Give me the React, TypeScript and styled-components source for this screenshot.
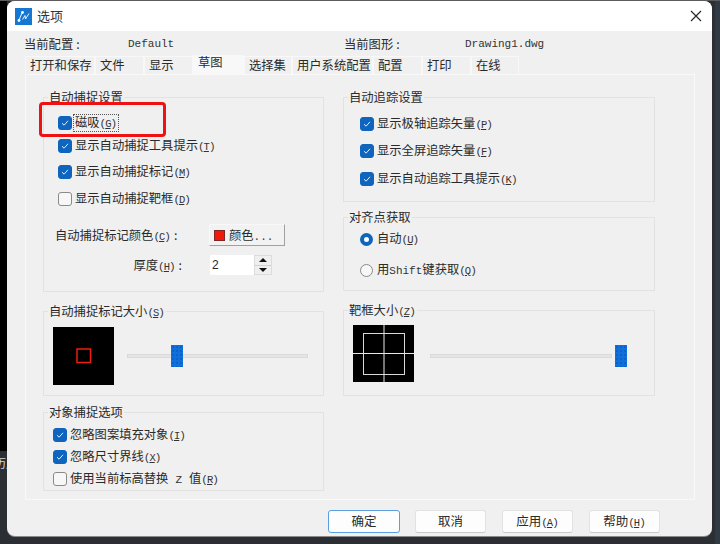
import React from 'react';
import styled, { createGlobalStyle } from 'styled-components';

const Global = createGlobalStyle`
  html, body { margin: 0; padding: 0; background: #2b2e33; }
  * { box-sizing: border-box; }
`;

const cjk = `"Noto Sans CJK SC", "Liberation Sans", sans-serif`;

const Page = styled.div`
  width: 720px;
  height: 544px;
  position: relative;
  overflow: hidden;
  display: flex;
  align-items: flex-start;
  background: #2b2e33;
  border-top: 1px solid #5c5c5c;
  font-family: ${cjk};
  font-size: 12.3px;
  color: #2a2a2a;
`;
const LeftStrip = styled.div`
  width: 7px;
  flex: none;
  display: flex;
  flex-direction: column;
  overflow: hidden;
`;
const BlackPart = styled.div`
  height: 450px;
  background: #000;
`;
const Fragment = styled.div`
  height: 24px;
  line-height: 24px;
  white-space: nowrap;
  color: #d8d8d8;
  font-size: 12px;
  text-indent: -6px;
`;
const RightStrip = styled.div`
  width: 8px;
  height: 543px;
  flex: none;
  background: #2f3a45;
  border-left: 3px solid #2b2e33;
`;
const Dialog = styled.div`
  width: 705px;
  height: 535px;
  flex: none;
  background: #f0f0f0;
  border-radius: 8px;
  overflow: hidden;
  box-shadow: 0 1px 0 #8a8a8a;
  display: flex;
  flex-direction: column;
`;
const TitleBar = styled.div`
  height: 30px;
  flex: none;
  background: #fff;
  display: flex;
  align-items: center;
  padding: 0 10px 0 8px;
  gap: 5px;
  font-size: 13px;
`;
const TitleText = styled.span`
  flex: 1;
  color: #333;
  padding-bottom: 2px;
`;
const ProfileRow = styled.div`
  display: grid;
  grid-template-columns: 104px 216px 121px 1fr;
  margin: 4px 0 0 17px;
  height: 16px;
  line-height: 16px;
  align-items: center;
`;
const Mono = styled.span`
  font-family: "Liberation Mono", monospace;
  font-size: 11px;
  color: #333;
`;
const ProfileValue = styled(Mono)`
  padding-top: 1px;
`;
const HotText = styled(Mono)`
  letter-spacing: -1px;
  margin-right: 1px;
`;
const TabStrip = styled.div`
  display: flex;
  align-items: flex-end;
  margin: 4px 0 0 18px;
  height: 19px;
`;
const Tab = styled.div<{ $w: number; $active?: boolean }>`
  width: ${p => p.$w}px;
  height: ${p => (p.$active ? 19 : 18)}px;
  line-height: ${p => (p.$active ? 13 : 17)}px;
  padding-left: 4px;
  background: ${p => (p.$active ? '#f8f8f8' : '#f0f0f0')};
  border: 1px solid #f8f8f8;
  border-bottom: none;
  white-space: nowrap;
`;
const TabPanel = styled.div`
  margin-left: 18px;
  width: 670px;
  height: 426px;
  border: 1px solid #f9f9f9;
  padding: 22px 0 0 17px;
  display: grid;
  grid-template-columns: 281px 312px;
  column-gap: 19px;
  align-items: start;
`;
const Column = styled.div`
  display: flex;
  flex-direction: column;
`;
const Group = styled.div<{ $h: number; $mt?: number; $pt: number; $pl: number }>`
  position: relative;
  height: ${p => p.$h}px;
  margin-top: ${p => p.$mt ?? 0}px;
  padding: ${p => p.$pt}px 0 0 ${p => p.$pl}px;
  border: 1px solid #e2e2e2;
`;
const Legend = styled.div`
  position: absolute;
  left: 4px;
  top: -9px;
  height: 16px;
  line-height: 16px;
  padding: 0 1px;
  background: #f0f0f0;
  white-space: nowrap;
`;
const OptionRow = styled.div<{ $h: number; $mt?: number }>`
  height: ${p => p.$h}px;
  margin-top: ${p => p.$mt ?? 0}px;
  display: flex;
  align-items: center;
  gap: 3px;
  white-space: nowrap;
`;
const OptionText = styled.span`
  padding-bottom: 2px;
`;
const CheckBox = styled.span<{ $on?: boolean }>`
  width: 14px;
  height: 14px;
  flex: none;
  border-radius: 3px;
  display: flex;
  align-items: center;
  justify-content: center;
  background: ${p => (p.$on ? '#0f65bd' : '#f7f7f7')};
  border: 1px solid ${p => (p.$on ? '#0f65bd' : '#8a8a8a')};
`;
const Radio = styled.span<{ $on?: boolean }>`
  width: 13px;
  height: 13px;
  flex: none;
  margin-right: 1px;
  border-radius: 50%;
  background: ${p => (p.$on ? '#fff' : '#f7f7f7')};
  border: ${p => (p.$on ? '4px solid #0f65bd' : '1px solid #8a8a8a')};
`;
const Focus = styled.span`
  outline: 1px dotted #555;
  outline-offset: 0;
  padding: 0 1px;
  margin-left: -1px;
  height: 16px;
  line-height: 15px;
  display: inline-block;
`;
const Under = styled.span`
  font-family: "Liberation Mono", monospace;
  font-size: 10.5px;
  text-decoration: underline;
`;
const ZLetter = styled(Mono)`
  padding: 0 7px;
`;
const Colon = styled.span`
  margin-left: 3px;
`;
const FormRow = styled.div<{ $mt: number }>`
  display: flex;
  align-items: center;
  margin: ${p => p.$mt}px 0 0 -3px;
`;
const FormLabel = styled.span<{ $w: number; $right?: boolean }>`
  width: ${p => p.$w}px;
  flex: none;
  white-space: nowrap;
  text-align: ${p => (p.$right ? 'right' : 'left')};
  padding-right: ${p => (p.$right ? 28 : 0)}px;
`;
const ColorButton = styled.div`
  width: 76px;
  height: 22px;
  background: #f2f2f2;
  border: 1px solid #f8f8f8;
  border-right-color: #a0a0a0;
  border-bottom-color: #a0a0a0;
  display: flex;
  align-items: center;
  gap: 4px;
  padding-left: 4px;
`;
const Swatch = styled.span`
  width: 11px;
  height: 11px;
  background: #f5170a;
  border: 1px solid #7a2a22;
`;
const NumberInput = styled.div`
  width: 44px;
  height: 20px;
  background: #fff;
  line-height: 20px;
  padding-left: 2px;
  font-family: "Liberation Sans", sans-serif;
  font-size: 12px;
`;
const Spinner = styled.div`
  width: 18px;
  height: 20px;
  display: flex;
  flex-direction: column;
  gap: 1px;
  background: #d0d0d0;
  border: 1px solid #dcdcdc;
`;
const SpinButton = styled.div<{ $down?: boolean }>`
  flex: 1;
  background: #efefef;
  display: flex;
  align-items: center;
  justify-content: center;
  &::after {
    content: '';
    border-left: 4px solid transparent;
    border-right: 4px solid transparent;
    ${p => (p.$down ? 'border-top: 4px solid #111;' : 'border-bottom: 4px solid #111;')}
  }
`;
const SizeRow = styled.div`
  display: flex;
  align-items: flex-start;
`;
const Preview = styled.svg`
  flex: none;
  display: block;
`;
const Slider = styled.div<{ $w: number; $ml: number; $mt: number }>`
  position: relative;
  width: ${p => p.$w}px;
  height: 22px;
  margin: ${p => p.$mt}px 0 0 ${p => p.$ml}px;
  display: flex;
  align-items: center;
`;
const Track = styled.div`
  width: 100%;
  height: 4px;
  background: #e6e6e6;
  border: 1px solid #dadada;
`;
const Thumb = styled.div<{ $left: number }>`
  position: absolute;
  left: ${p => p.$left}px;
  top: 0;
  width: 12px;
  height: 22px;
  background-color: #0f6fdc;
  background-image: radial-gradient(#0a52a8 0.6px, transparent 0.8px);
  background-size: 4px 4px;
`;
const ButtonRow = styled.div`
  display: flex;
  gap: 16px;
  margin: 10px 0 0 321px;
`;
const DialogButton = styled.div<{ $primary?: boolean }>`
  width: ${p => (p.$primary ? 72 : 71)}px;
  margin-right: ${p => (p.$primary ? -1 : 0)}px;
  height: 23px;
  line-height: 20px;
  text-align: center;
  background: #fdfdfd;
  border: 1px solid ${p => (p.$primary ? '#5b9fe0' : '#e2e2e2')};
  border-bottom-color: ${p => (p.$primary ? '#5b9fe0' : '#c8c8c8')};
  border-radius: 3px;
  font-size: 12.5px;
`;
const Annotation = styled.div`
  position: absolute;
  left: 39px;
  top: 101px;
  width: 127px;
  height: 35px;
  border: 3px solid #f01212;
  border-radius: 4px;
`;

const Check = () => (
  <svg width="8" height="8" viewBox="0 0 8 8">
    <path d="M1 4.2 L3.1 6.2 L7 1.8" fill="none" stroke="#dfeeff" strokeWidth="1" />
  </svg>
);

const Hot = ({ k }: { k: string }) => (
  <HotText>
    (<Under>{k}</Under>)
  </HotText>
);

const Option = ({ on, h, label, k }: { on?: boolean; h: number; label: React.ReactNode; k: string }) => (
  <OptionRow $h={h}>
    <CheckBox $on={on}>{on && <Check />}</CheckBox>
    <OptionText>
      {label}
      <Hot k={k} />
    </OptionText>
  </OptionRow>
);

const AppIcon = () => (
  <svg width="17" height="17" viewBox="0 0 17 17" style={{ flex: 'none' }}>
    <rect width="17" height="17" fill="#1677d2" />
    <path d="M4 12 L7 5 M7.5 11.5 L10 7.5 L10.5 11 L14 5.5" fill="none" stroke="#fff" strokeWidth="0.9" />
    <circle cx="4" cy="12.5" r="1.4" fill="#fff" />
    <circle cx="7.5" cy="4.5" r="1.4" fill="#fff" />
  </svg>
);

const CloseIcon = () => (
  <svg width="12" height="12" viewBox="0 0 12 12" style={{ flex: 'none' }}>
    <path d="M1 1 L11 11 M11 1 L1 11" stroke="#222" strokeWidth="1.1" />
  </svg>
);

const tabs: [string, number][] = [
  ['打开和保存', 70], ['文件', 49], ['显示', 49], ['草图', 51], ['选择集', 48],
  ['用户系统配置', 81], ['配置', 49], ['打印', 49], ['在线', 48],
];

export default function App() {
  return (
    <>
      <Global />
      <Page>
        <LeftStrip>
          <BlackPart />
          <Fragment>历用</Fragment>
        </LeftStrip>
        <Dialog>
          <TitleBar>
            <AppIcon />
            <TitleText>选项</TitleText>
            <CloseIcon />
          </TitleBar>
          <ProfileRow>
            <span>当前配置<Colon>:</Colon></span>
            <ProfileValue>Default</ProfileValue>
            <span>当前图形<Colon>:</Colon></span>
            <ProfileValue>Drawing1.dwg</ProfileValue>
          </ProfileRow>
          <TabStrip>
            {tabs.map(([t, w]) => (
              <Tab key={t} $w={w} $active={t === '草图'}>{t}</Tab>
            ))}
          </TabStrip>
          <TabPanel>
            <Column>
              <Group $h={195} $pt={14} $pl={14}>
                <Legend>自动捕捉设置</Legend>
                <OptionRow $h={22}>
                  <CheckBox $on><Check /></CheckBox>
                  <Focus>磁吸<Hot k="G" /></Focus>
                </OptionRow>
                <Option on h={23} label="显示自动捕捉工具提示" k="T" />
                <Option on h={30} label="显示自动捕捉标记" k="M" />
                <Option h={23} label="显示自动捕捉靶框" k="D" />
                <FormRow $mt={14}>
                  <FormLabel $w={154}>自动捕捉标记颜色<Hot k="C" /><Colon>:</Colon></FormLabel>
                  <ColorButton>
                    <Swatch />
                    <span>颜色<Mono>...</Mono></span>
                  </ColorButton>
                </FormRow>
                <FormRow $mt={9}>
                  <FormLabel $w={155} $right>厚度<Hot k="H" /><Colon>:</Colon></FormLabel>
                  <NumberInput>2</NumberInput>
                  <Spinner>
                    <SpinButton />
                    <SpinButton $down />
                  </Spinner>
                </FormRow>
              </Group>
              <Group $h={85} $mt={19} $pt={15} $pl={9}>
                <Legend>自动捕捉标记大小<Hot k="S" /></Legend>
                <SizeRow>
                  <Preview width="61" height="58" viewBox="0 0 61 58">
                    <rect width="61" height="58" fill="#000" />
                    <rect x="24" y="22" width="13.5" height="13.5" fill="none" stroke="#f01c0c" strokeWidth="1.5" />
                  </Preview>
                  <Slider $w={181} $ml={13} $mt={18}>
                    <Track />
                    <Thumb $left={44} />
                  </Slider>
                </SizeRow>
              </Group>
              <Group $h={79} $mt={16} $pt={11} $pl={9}>
                <Legend>对象捕捉选项</Legend>
                <Option on h={22} label="忽略图案填充对象" k="I" />
                <Option on h={22} label="忽略尺寸界线" k="X" />
                <Option h={21} label={<>使用当前标高替换<ZLetter>Z</ZLetter>值</>} k="R" />
              </Group>
            </Column>
            <Column>
              <Group $h={105} $pt={13} $pl={16}>
                <Legend>自动追踪设置</Legend>
                <Option on h={25} label="显示极轴追踪矢量" k="P" />
                <Option on h={29} label="显示全屏追踪矢量" k="F" />
                <Option on h={28} label="显示自动追踪工具提示" k="K" />
              </Group>
              <Group $h={74} $mt={15} $pt={9} $pl={16}>
                <Legend>对齐点获取</Legend>
                <OptionRow $h={24}>
                  <Radio $on />
                  <OptionText>自动<Hot k="U" /></OptionText>
                </OptionRow>
                <OptionRow $h={24} $mt={7}>
                  <Radio />
                  <OptionText>用<Mono>Shift</Mono>键获取<Hot k="Q" /></OptionText>
                </OptionRow>
              </Group>
              <Group $h={86} $mt={19} $pt={14} $pl={9}>
                <Legend>靶框大小<Hot k="Z" /></Legend>
                <SizeRow>
                  <Preview width="61" height="57" viewBox="0 0 61 57">
                    <rect width="61" height="57" fill="#000" />
                    <rect x="10.5" y="8.5" width="41" height="41" fill="none" stroke="#d8d8d8" />
                    <path d="M31 0 V57 M0 28.5 H61" stroke="#e8e8e8" fill="none" />
                  </Preview>
                  <Slider $w={182} $ml={16} $mt={20}>
                    <Track />
                    <Thumb $left={185} />
                  </Slider>
                </SizeRow>
              </Group>
            </Column>
          </TabPanel>
          <ButtonRow>
            <DialogButton $primary>确定</DialogButton>
            <DialogButton>取消</DialogButton>
            <DialogButton>应用<Hot k="A" /></DialogButton>
            <DialogButton>帮助<Hot k="H" /></DialogButton>
          </ButtonRow>
        </Dialog>
        <RightStrip />
        <Annotation />
      </Page>
    </>
  );
}
